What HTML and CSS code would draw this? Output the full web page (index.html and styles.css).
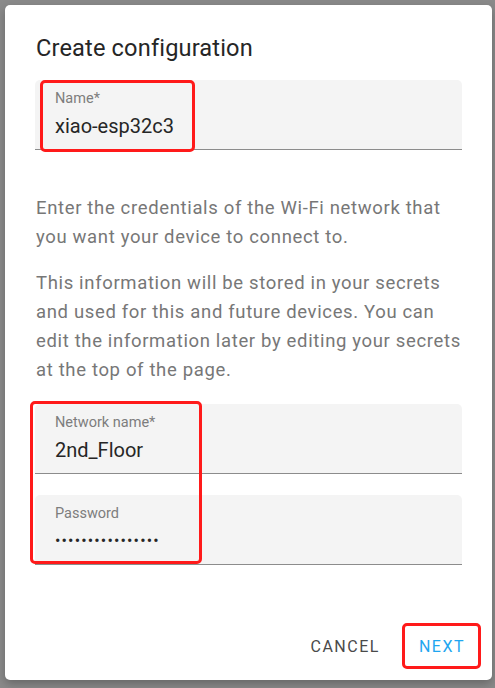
FILE: index.html
```html
<!DOCTYPE html>
<html lang="en">
<head>
<meta charset="utf-8">
<title>Create configuration</title>
<link rel="stylesheet" href="styles.css">
</head>
<body>
<div class="dialog">
  <h2 class="title">Create configuration</h2>
  <div class="field field-name">
    <span class="label">Name*</span>
    <span class="value">xiao-esp32c3</span>
    <div class="mark mark-name"></div>
  </div>
  <p class="text p1">Enter the credentials of the Wi-Fi network that you want your device to connect to.</p>
  <p class="text p2">This information will be stored in your secrets and used for this and future devices. You can edit the information later by editing your secrets at the top of the page.</p>
  <div class="wifi">
    <div class="field">
      <span class="label">Network name*</span>
      <span class="value">2nd_Floor</span>
    </div>
    <div class="field">
      <span class="label">Password</span>
      <span class="value dots">••••••••••••••••</span>
    </div>
    <div class="mark mark-wifi"></div>
  </div>
  <div class="actions">
    <button class="btn cancel">Cancel</button>
    <button class="btn next">Next<span class="mark mark-next"></span></button>
  </div>
</div>
</body>
</html>
```

FILE: styles.css
```css
html, body {
  margin: 0;
  padding: 0;
}
body {
  background: #8a8a8a;
  font-family: Roboto, "Liberation Sans", sans-serif;
  width: 495px;
  height: 688px;
  overflow: hidden;
}
.dialog {
  box-sizing: border-box;
  margin: 5px 0 0 5px;
  width: 487px;
  height: 675px;
  background: #fff;
  border-radius: 5px;
  box-shadow: 0 4px 10px rgba(0,0,0,0.25);
  padding: 29px 30px 0 30px;
  display: flex;
  flex-direction: column;
  position: relative;
}
.title {
  margin: 0;
  font-size: 23.6px;
  font-weight: 400;
  line-height: 28px;
  color: #262626;
  letter-spacing: 0.15px;
  padding-left: 1px;
}
.field {
  position: relative;
  box-sizing: border-box;
  height: 70px;
  background: #f4f4f4;
  border-radius: 5px 5px 0 0;
  border-bottom: 1px solid #8c8c8c;
  padding: 11px 20px 0 20px;
  display: flex;
  flex-direction: column;
}
.field-name {
  margin-top: 18px;
}
.label {
  font-size: 14.5px;
  line-height: 16px;
  color: #7d7d7d;
}
.value {
  font-size: 20px;
  line-height: 22px;
  margin-top: 8px;
  color: #262626;
}
.dots {
  font-size: 16px;
  letter-spacing: 1.15px;
  margin-top: 8px;
}
.text {
  margin: 0;
  font-size: 18.5px;
  line-height: 28.7px;
  color: #777;
  letter-spacing: 0.65px;
  padding-left: 1px;
}
.p1 { margin-top: 44px; }
.p2 { margin-top: 18px; }
.wifi {
  position: relative;
  margin-top: 20px;
  display: flex;
  flex-direction: column;
  gap: 21px;
}
.actions {
  margin-top: auto;
  height: 53px;
  display: flex;
  justify-content: flex-end;
  align-items: flex-start;
  gap: 19px;
  margin-right: -13px;
}
.btn {
  position: relative;
  background: none;
  border: none;
  font-family: inherit;
  font-size: 16px;
  font-weight: 400;
  letter-spacing: 1.5px;
  text-transform: uppercase;
  padding: 0 10px;
  height: 40px;
  line-height: 40px;
  cursor: pointer;
}
.cancel { color: #4a4a4a; }
.next { color: #1fa6f0; }
.mark {
  position: absolute;
  border: 3px solid #ff1a1a;
  border-radius: 5px;
  pointer-events: none;
}
.mark-name {
  left: 5px;
  top: 0;
  width: 149px;
  height: 66px;
}
.mark-wifi {
  left: -5px;
  top: -3px;
  width: 166px;
  height: 157px;
}
.mark-next {
  left: -7px;
  top: -4px;
  width: 73px;
  height: 40px;
}
```
